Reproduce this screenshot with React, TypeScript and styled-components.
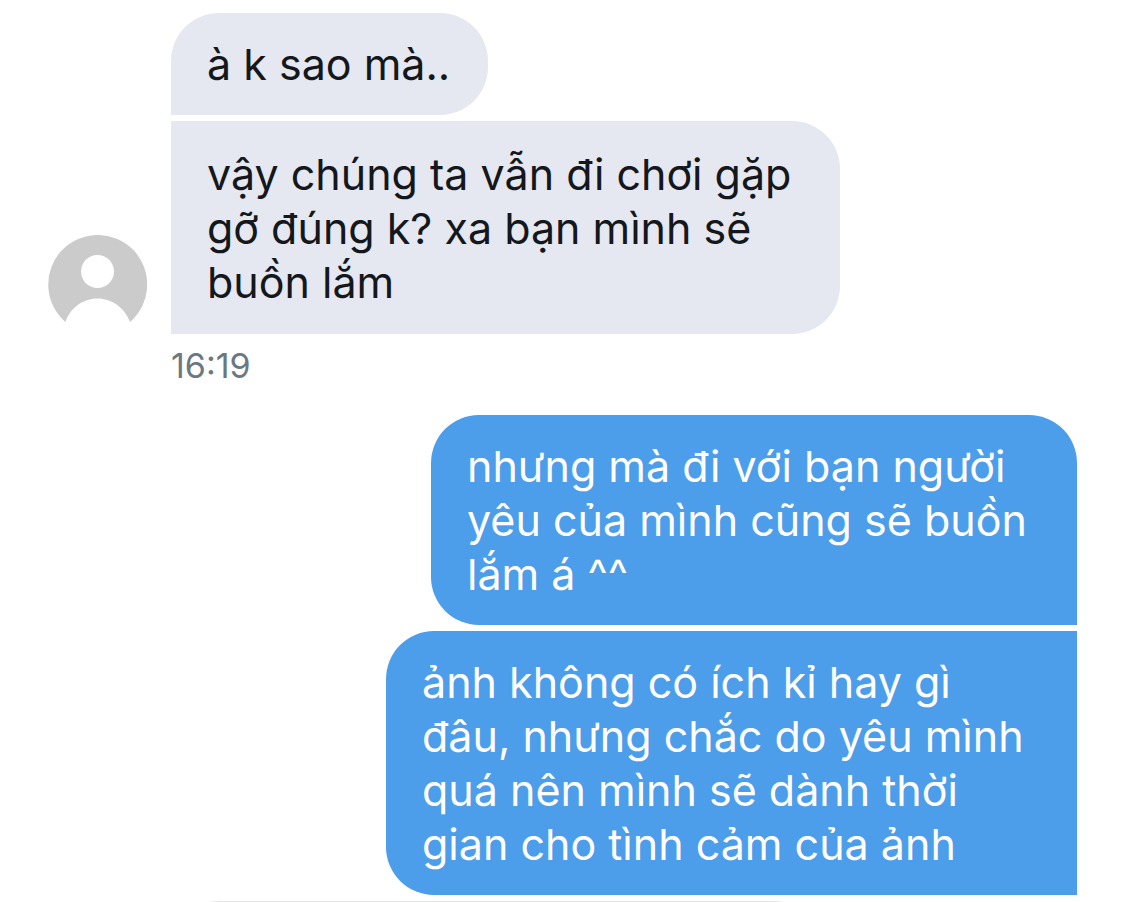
import React from "react";
import styled, { createGlobalStyle } from "styled-components";

const GlobalStyle = createGlobalStyle`
  *, *::before, *::after { box-sizing: border-box; }
  body {
    margin: 0;
    background: #ffffff;
    font-family: Inter, "Liberation Sans", sans-serif;
  }
`;

const Conversation = styled.main`
  display: flex;
  flex-direction: column;
  height: 100vh;
  padding: 13px 48px 0;
  overflow: hidden;
`;

const IncomingGroup = styled.section`
  display: flex;
  flex-shrink: 0;
  align-items: flex-end;
  gap: 24px;
`;

const OutgoingGroup = styled.section`
  display: flex;
  flex-shrink: 0;
  flex-direction: column;
  align-items: flex-end;
  gap: 6px;
  margin-top: 29px;
`;

const Stack = styled.div`
  display: flex;
  flex-direction: column;
  align-items: flex-start;
  gap: 6px;
`;

const Avatar = styled.svg`
  flex-shrink: 0;
  width: 99px;
  height: 99px;
`;

const Bubble = styled.p<{ $width: number }>`
  width: ${({ $width }) => $width}px;
  margin: 0;
  padding: 24px 36px;
  font-size: 43px;
  line-height: 54px;
`;

const Received = styled(Bubble)<{ $first?: boolean }>`
  padding-block: ${({ $first }) => ($first ? "24px" : "26px 25px")};
  border-radius: ${({ $first }) => ($first ? 48 : 0)}px 48px 48px 0;
  background: #e5e8f0;
  color: #14171c;
`;

const Sent = styled(Bubble)<{ $first?: boolean }>`
  border-radius: 48px ${({ $first }) => ($first ? 48 : 0)}px 0 48px;
  background: #4c9dea;
  color: #ffffff;
`;

const Line = styled.span`
  display: block;
  white-space: nowrap;
`;

const Timestamp = styled.time`
  flex-shrink: 0;
  margin: 12px 0 0 123px;
  color: #6a7883;
  font-size: 34px;
  line-height: 40px;
`;

const NextBubble = styled.div`
  flex-shrink: 0;
  width: 650px;
  height: 102px;
  margin: 6px 0 0 123px;
  border-radius: 48px 48px 48px 0;
  background: #e1e5ea;
`;

const lines = (items: string[]) =>
  items.map((text) => <Line key={text}>{text} </Line>);

export default function App() {
  return (
    <>
      <GlobalStyle />
      <Conversation lang="vi">
        <IncomingGroup>
          <Avatar viewBox="0 0 99 99" aria-hidden="true">
            <path
              fill="#cbcbcb"
              fillRule="evenodd"
              d="M17.5 87 A49.5 49.5 0 1 1 82 87 C77 73 64 63.500 49.500 63.500 C35 63.500 22 73 17.500 87 Z M49.500 20 A16.500 16.500 0 1 0 49.500 53 A16.500 16.500 0 1 0 49.500 20 Z"
            />
          </Avatar>
          <Stack>
            <Received $width={317} $first>
              {lines(["à k sao mà.."])}
            </Received>
            <Received $width={669}>
              {lines([
                "vậy chúng ta vẫn đi chơi gặp",
                "gỡ đúng k? xa bạn mình sẽ",
                "buồn lắm",
              ])}
            </Received>
          </Stack>
        </IncomingGroup>
        <Timestamp dateTime="16:19">16:19</Timestamp>
        <OutgoingGroup>
          <Sent $width={646} $first>
            {lines([
              "nhưng mà đi với bạn người",
              "yêu của mình cũng sẽ buồn",
              "lắm á ^^",
            ])}
          </Sent>
          <Sent $width={691}>
            {lines([
              "ảnh không có ích kỉ hay gì",
              "đâu, nhưng chắc do yêu mình",
              "quá nên mình sẽ dành thời",
              "gian cho tình cảm của ảnh",
            ])}
          </Sent>
        </OutgoingGroup>
        <NextBubble />
      </Conversation>
    </>
  );
}
